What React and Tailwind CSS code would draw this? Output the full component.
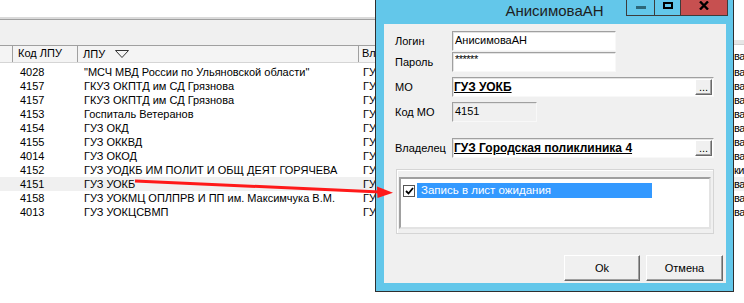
// Grid of organisations with a login dialog over it

const rows = [
    ['4028', '"МСЧ МВД России по Ульяновской области"', 'ва'],
    ['4157', 'ГКУЗ ОКПТД им СД Грязнова', 'ва'],
    ['4157', 'ГКУЗ ОКПТД им СД Грязнова', 'ва'],
    ['4153', 'Госпиталь Ветеранов', 'ва'],
    ['4154', 'ГУЗ ОКД', 'ва'],
    ['4155', 'ГУЗ ОККВД', 'ва'],
    ['4014', 'ГУЗ ОКОД', 'ва'],
    ['4152', 'ГУЗ УОДКБ ИМ ПОЛИТ И ОБЩ ДЕЯТ ГОРЯЧЕВА', 'ки'],
    ['4151', 'ГУЗ УОКБ', 'ва'],
    ['4158', 'ГУЗ УОКМЦ ОПЛПРВ И ПП им. Максимчука В.М.', 'ва'],
    ['4013', 'ГУЗ УОКЦСВМП', 'ва'],
];

const SELECTED = 8;

const field = "h-[20px] bg-white border border-t-[#a0a0a0] border-l-[#a0a0a0] border-r-[#f8f8f8] border-b-[#f8f8f8] shadow-[inset_1px_1px_0_#e3e3e3]";
const raised = "bg-[#f0f0f0] border border-t-white border-l-white border-r-[#696969] border-b-[#696969] shadow-[inset_-1px_-1px_0_#a0a0a0]";

const DotsButton = () => (
    <div className={`${raised} w-[17px] h-[16px] mr-[1px] flex items-end justify-center leading-[11px] pb-[1px] text-[11px]`}>...</div>
);

const Row = ({ label, mt, children }) => (
    <div className={`flex items-center pl-[11px] ${mt}`}>
        <div className="w-[57px] leading-[14px]">{label}</div>
        {children}
    </div>
);

const Dialog = () => (
    <div className="absolute left-[375px] top-0 w-[359px] h-[292px] bg-[#63c7ea] border-x border-b border-[#2f2f2f] flex flex-col">
        {/* Title bar */}
        <div className="relative h-[24px] shrink-0">
            <div className="absolute inset-x-0 top-[2px] text-center text-[15px] leading-[18px] text-[#1e1e1e]">АнисимоваАН</div>
            <div className="absolute left-[250px] top-0 flex h-[16px] border-l border-b border-[#3c3c3c]">
                <div className="w-[28px] border-r border-[#3c3c3c] flex justify-center">
                    <div className="mt-[6px] w-[10px] h-[3px] bg-[#2d6779]" />
                </div>
                <div className="w-[26px] border-r border-[#3c3c3c] flex justify-center">
                    <div className="mt-[2px] w-[10px] h-[7px] border-2 border-black" />
                </div>
                <div className="w-[47px] border-r border-[#3c3c3c] bg-[#c75050] flex justify-center">
                    <svg width="10" height="9" viewBox="0 0 10 9" className="mt-[1px]">
                        <path d="M1 0.5 L9 8.5 M9 0.5 L1 8.5" stroke="#000" strokeWidth="2.4" />
                    </svg>
                </div>
            </div>
        </div>

        {/* Client area */}
        <div className="ml-[8px] w-[342px] h-[259px] bg-[#f0f0f0] flex flex-col">
            <Row label="Логин" mt="mt-[7px]">
                <div className={`${field} w-[164px] pl-[2px] leading-[17px]`}>АнисимоваАН</div>
            </Row>
            <Row label="Пароль" mt="mt-[1px]">
                <div className={`${field} w-[164px] pl-[2px] leading-[13px] tracking-[-0.5px]`}>******</div>
            </Row>
            <Row label="МО" mt="mt-[5px]">
                <div className={`${field} w-[262px] flex items-center justify-between`}>
                    <span className="pl-[1px] font-bold text-[12px] underline">ГУЗ УОКБ</span>
                    <DotsButton />
                </div>
            </Row>
            <Row label="Код МО" mt="mt-[5px]">
                <div className={`${field} w-[85px] !bg-[#f0f0f0] pl-[2px] leading-[17px]`}>4151</div>
            </Row>
            <Row label="Владелец" mt="mt-[16px]">
                <div className={`${field} w-[262px] flex items-center justify-between`}>
                    <span className="pl-[1px] font-bold text-[12px] underline">ГУЗ Городская поликлиника 4</span>
                    <DotsButton />
                </div>
            </Row>

            {/* Options group */}
            <div className="ml-[12px] mt-[11px] w-[318px] h-[65px] border border-[#d5d5d5] shadow-[inset_1px_1px_0_#fff] pt-[7px] pl-[2px]">
                <div className="w-[312px] h-[52px] bg-white border-2 border-t-[#a0a0a0] border-l-[#a0a0a0] border-r-[#e3e3e3] border-b-[#e3e3e3] pt-[4px] pl-[2px]">
                    <div className="flex items-center">
                        <div className="w-[12px] h-[12px] border border-[#555] bg-white flex items-center justify-center">
                            <svg width="9" height="8" viewBox="0 0 9 8">
                                <path d="M1 4 L3.5 6.5 L8 1" stroke="#000" strokeWidth="1.8" fill="none" />
                            </svg>
                        </div>
                        <div className="ml-[2px] w-[235px] h-[15px] bg-[#3399ff] text-white text-[11.5px] leading-[15px] pl-[4px]">Запись в лист ожидания</div>
                    </div>
                </div>
            </div>

            {/* Buttons */}
            <div className="flex mt-[21px]">
                <div className={`${raised} ml-[180px] w-[76px] h-[26px] flex items-center justify-center`}>Ok</div>
                <div className={`${raised} ml-[6px] w-[77px] h-[26px] flex items-center justify-center`}>Отмена</div>
            </div>
        </div>
    </div>
);

const Arrow = () => (
    <svg className="absolute left-0 top-0 pointer-events-none" width="744" height="303">
        <line x1="135" y1="181" x2="380" y2="192" stroke="#ff1a1a" strokeWidth="3" />
        <polygon points="377,186.5 393,192.8 377.5,198" fill="#ff1a1a" />
    </svg>
);

export default function App() {
    return (
        <div className="relative w-[744px] h-[303px] overflow-hidden bg-white flex text-[11px] text-black font-['Liberation_Sans',Arial,sans-serif]">
            {/* Main grid */}
            <div className="w-[734px] shrink-0 flex flex-col">
                <div className="h-[19px] border-b-2 border-[#dadada]" />
                <div className="h-[26px] bg-[#f0f0f0] border-t border-[#a0a0a0]" />
                <div className="h-[18px] flex bg-[#f4f4f4] border-t border-b border-t-[#a0a0a0] border-b-[#d5d5d5] leading-[15px]">
                    <div className="w-[13px] border-r border-[#a0a0a0]" />
                    <div className="w-[65px] border-r border-[#a0a0a0] pl-[5px]">Код ЛПУ</div>
                    <div className="w-[281px] border-r border-[#a0a0a0] pl-[5px] flex items-center">
                        <span>ЛПУ</span>
                        <svg width="14" height="8" viewBox="0 0 14 8" className="ml-[10px]">
                            <path d="M0.5 0.5 H13.5 L7 7.5 Z" stroke="#333" strokeWidth="1" fill="none" />
                        </svg>
                    </div>
                    <div className="flex-1 pl-[3px]">Владелец</div>
                </div>
                <div className="pt-[2px]">
                    {rows.map((r, i) => (
                        <div key={i} className={`flex h-[14px] leading-[14px] ${i === SELECTED ? 'bg-[#f0f0f0]' : ''}`}>
                            <div className="w-[13px]" />
                            <div className="w-[65px] pl-[7px]">{r[0]}</div>
                            <div className="w-[281px] pl-[6px] whitespace-nowrap">{r[1]}</div>
                            <div className="flex-1 pl-[4px]">ГУЗ</div>
                        </div>
                    ))}
                </div>
            </div>

            {/* Neighbouring column on the right */}
            <div className="flex-1 flex flex-col tracking-[-0.5px]">
                <div className="h-[40px]" />
                <div className="h-[5px] bg-[#e6e6e6] border-b border-[#d0d0d0]" />
                <div className="h-[18px] leading-[22px]">ва</div>
                <div className="pt-[2px]">
                    {rows.map((r, i) => (
                        <div key={i} className={`h-[14px] leading-[14px] ${i === SELECTED ? 'bg-[#f0f0f0]' : ''}`}>{r[2]}</div>
                    ))}
                </div>
            </div>

            <Dialog />
            <Arrow />
        </div>
    );
}
